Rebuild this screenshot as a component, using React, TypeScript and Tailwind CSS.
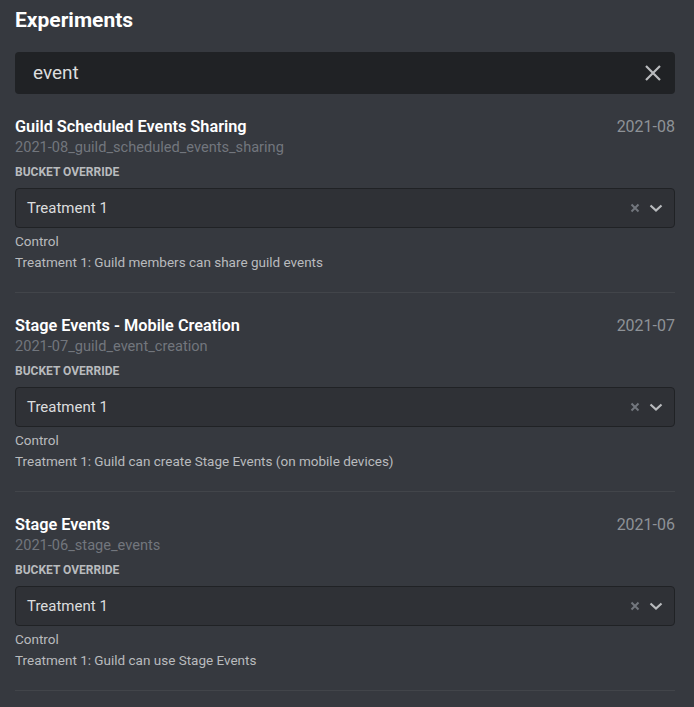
import React from "react";

const items = [
  {
    title: "Guild Scheduled Events Sharing",
    date: "2021-08",
    id: "2021-08_guild_scheduled_events_sharing",
    desc: "Treatment 1: Guild members can share guild events",
  },
  {
    title: "Stage Events - Mobile Creation",
    date: "2021-07",
    id: "2021-07_guild_event_creation",
    desc: "Treatment 1: Guild can create Stage Events (on mobile devices)",
  },
  {
    title: "Stage Events",
    date: "2021-06",
    id: "2021-06_stage_events",
    desc: "Treatment 1: Guild can use Stage Events",
  },
];

function Item({ it }: { it: (typeof items)[number] }) {
  return (
    <div className="pt-[22px] pb-[19px] border-b border-[#42454a]">
      <div className="flex items-center justify-between h-5 pt-[1px]">
        <div className="text-[16.3px] leading-5 font-semibold text-white">{it.title}</div>
        <div className="text-[16px] leading-5 text-[#8e9297]">{it.date}</div>
      </div>
      <div className="mt-[2px] text-[14.6px] leading-[18px] text-[#72767d]">{it.id}</div>
      <div className="mt-[8px] text-[12px] leading-4 font-bold uppercase text-[#b9bbbe]">Bucket Override</div>
      <div className="mt-[8px] h-10 rounded-[4px] border border-[#202225] bg-[#2f3136] flex items-center pl-[11px] pr-[11px]">
        <div className="flex-1 text-[15px] text-[#dcddde] pt-[1px]">Treatment 1</div>
        <svg width="10" height="10" viewBox="0 0 10 10" className="mr-[9px]">
          <path d="M1.5 1.5 L8.5 8.5 M8.5 1.5 L1.5 8.5" stroke="#72767d" strokeWidth="2" />
        </svg>
        <svg width="14" height="10" viewBox="0 0 14 10">
          <path d="M1.5 2.5 L7 7.5 L12.5 2.5" stroke="#b9bbbe" strokeWidth="2.2" fill="none" />
        </svg>
      </div>
      <div className="mt-[3px] text-[13.5px] leading-[21px] text-[#b9bbbe]">Control</div>
      <div className="text-[13.5px] leading-[21px] text-[#b9bbbe]">{it.desc}</div>
    </div>
  );
}

export default function App() {
  return (
    <div
      className="w-[694px] h-[707px] overflow-hidden bg-[#36393f] pl-[15px] pr-[19px]"
      style={{ fontFamily: 'Roboto, "Noto Sans", sans-serif' }}
    >
      <div className="pt-[8px] h-[32px] text-[21px] leading-6 font-bold text-white">Experiments</div>
      <div className="mt-[20px] h-[42px] rounded-[4px] bg-[#202225] flex items-center pl-[18px] pr-[13px]">
        <div className="flex-1 text-[19px] text-[#dcddde] pt-[1px]">event</div>
        <svg width="18" height="18" viewBox="0 0 18 18">
          <path d="M2 2 L16 16 M16 2 L2 16" stroke="#b9bbbe" strokeWidth="2.2" />
        </svg>
      </div>
      {items.map((it) => (
        <Item key={it.id} it={it} />
      ))}
    </div>
  );
}
